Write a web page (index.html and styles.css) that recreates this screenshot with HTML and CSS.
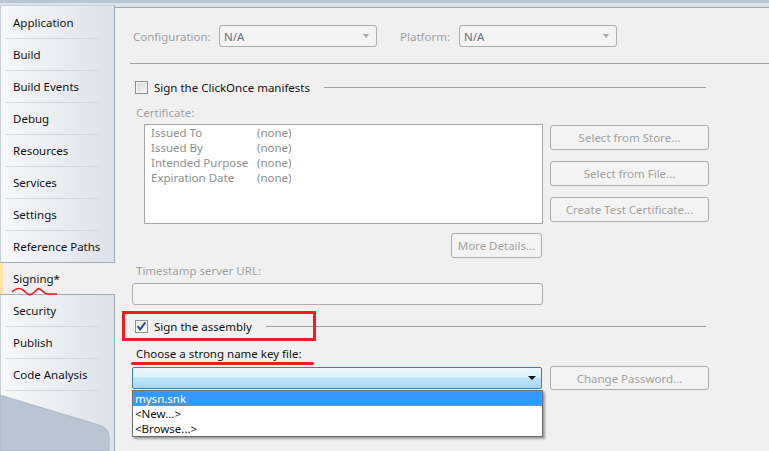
FILE: index.html
```html
<!DOCTYPE html>
<html>
<head>
<meta charset="utf-8">
<link rel="stylesheet" href="styles.css">
</head>
<body>
<div class="app">
  <nav class="tabs">
    <div class="group group-top">
      <div class="tab tab-first">Application</div>
      <div class="tab">Build</div>
      <div class="tab">Build Events</div>
      <div class="tab">Debug</div>
      <div class="tab">Resources</div>
      <div class="tab">Services</div>
      <div class="tab">Settings</div>
      <div class="tab">Reference Paths</div>
    </div>
    <div class="tab-selected">Signing*</div>
    <div class="group group-bottom">
      <div class="tab tab-first tab-short">Security</div>
      <div class="tab">Publish</div>
      <div class="tab">Code Analysis</div>
      <div class="tabs-filler">
        <svg class="filler-shape" width="114" height="60" viewBox="0 0 114 60">
          <path d="M0 6 Q0 4 3 5 L99 34 Q109 37 109 46 L109 60 L0 60 Z" fill="#bac4d3" stroke="#aeb8c8" stroke-width="1"/>
        </svg>
      </div>
    </div>
  </nav>

  <main class="content">
    <div class="config-row">
      <span class="label-disabled config-label">Configuration:</span>
      <div class="combo"><span>N/A</span><span class="arrow-grey"></span></div>
      <span class="label-disabled platform-label">Platform:</span>
      <div class="combo"><span>N/A</span><span class="arrow-grey"></span></div>
    </div>
    <div class="rule"></div>

    <div class="section-head section-clickonce">
      <span class="checkbox"></span>
      <span class="section-title">Sign the ClickOnce manifests</span>
      <span class="section-line"></span>
    </div>

    <div class="label-disabled cert-label">Certificate:</div>
    <div class="cert-row">
      <div class="cert-box">
        <div class="cert-line"><span class="cert-key">Issued To</span><span>(none)</span></div>
        <div class="cert-line"><span class="cert-key">Issued By</span><span>(none)</span></div>
        <div class="cert-line"><span class="cert-key">Intended Purpose</span><span>(none)</span></div>
        <div class="cert-line"><span class="cert-key">Expiration Date</span><span>(none)</span></div>
      </div>
      <div class="cert-buttons">
        <button class="btn btn-wide">Select from Store...</button>
        <button class="btn btn-wide">Select from File...</button>
        <button class="btn btn-wide">Create Test Certificate...</button>
      </div>
    </div>
    <div class="more-row"><button class="btn btn-more">More Details...</button></div>

    <div class="label-disabled ts-label">Timestamp server URL:</div>
    <div class="textbox"></div>

    <div class="section-head section-assembly">
      <span class="checkbox checkbox-checked">
        <svg width="11" height="11" viewBox="0 0 11 11"><path d="M1.6 5.2 L4.2 8.4 L9.4 1.4" fill="none" stroke="#34497a" stroke-width="1.9"/></svg>
      </span>
      <span class="section-title">Sign the assembly</span>
      <span class="section-line"></span>
    </div>

    <div class="key-label">Choose a strong name key file:</div>
    <div class="key-row">
      <div class="combo-focus"><span class="arrow-black"></span></div>
      <button class="btn btn-wide btn-pass">Change Password...</button>
      <ul class="dropdown">
        <li class="dropdown-item dropdown-item-active">mysn.snk</li>
        <li class="dropdown-item">&lt;New...&gt;</li>
        <li class="dropdown-item">&lt;Browse...&gt;</li>
      </ul>
    </div>
    <div class="under-note">When delay signed, the project will not run or be debuggable.</div>
  </main>

  <div class="annot-box"></div>
  <div class="annot-underline"></div>
  <svg class="annot-squiggle" width="48" height="12" viewBox="0 0 48 12">
    <path d="M1 6 C4 3, 8 1, 12 4 S17 10, 21 8 S26 1, 29 3 S34 9, 38 8 L46 8" fill="none" stroke="#ee1c25" stroke-width="1.6"/>
  </svg>
</div>
</body>
</html>
```

FILE: styles.css
```css
* { box-sizing: border-box; }
html, body { margin: 0; padding: 0; }
body {
  font-family: "Noto Sans", "Open Sans", sans-serif;
  font-size: 11.5px;
  color: #1e1e1e;
  width: 769px;
  height: 451px;
  overflow: hidden;
}
.app {
  position: relative;
  display: flex;
  width: 769px;
  height: 451px;
  background: #dde2ea;
  border-top: 3px solid #b9c4d4;
}

/* ---------- left tabs ---------- */
.tabs {
  width: 115px;
  flex: none;
  display: flex;
  flex-direction: column;
  padding-top: 2px;
}
.group {
  background: linear-gradient(to right, #f7f8fa, #dde1e8);
  border-left: 1px solid #c6cdd7;
  border-right: 1px solid #a2abb9;
}
.group-top {
  border-top: 1px solid #c9d0da;
  border-bottom: 1px solid #a2abb9;
  border-top-left-radius: 2px;
}
.group-bottom {
  flex: 1;
  display: flex;
  flex-direction: column;
  border-top: 1px solid #a2abb9;
}
.tab {
  height: 32px;
  line-height: 31px;
  padding-left: 12px;
  color: #111;
}
.tab::before {
  content: "";
  display: block;
  height: 1px;
  margin: 0 14px 0 -7px;
  background: #d4d8df;
}
.tab-first::before { background: transparent; }
.tab-short { height: 31px; line-height: 31px; }
.tab-short::before { display: none; }
.tab-selected {
  height: 31px;
  line-height: 31px;
  padding-left: 10px;
  background: #f0f0f0;
  border-left: 3px solid #fde4a6;
  color: #111;
}
.tabs-filler {
  flex: 1;
  display: flex;
  flex-direction: column;
  justify-content: flex-end;
}
.tabs-filler::before {
  content: "";
  display: block;
  height: 1px;
  margin: 0 14px auto 5px;
  background: #d4d8df;
}
.filler-shape { display: block; margin-left: -1px; }

/* ---------- content ---------- */
.content {
  flex: 1;
  margin-top: 4px;
  background: #f0f0f0;
  border-top: 1px solid #a7a7a7;
  padding-left: 15px;
  display: flex;
  flex-direction: column;
}
.label-disabled { color: #a2a2a2; }

.config-row {
  display: flex;
  align-items: center;
  margin-top: 17px;
  margin-left: 3px;
  height: 22px;
}
.config-label { width: 86px; }
.platform-label { width: 59px; margin-left: 23px; }
.combo {
  width: 158px;
  height: 22px;
  border: 1px solid #adadad;
  border-radius: 3px;
  background: #f3f3f3;
  display: flex;
  align-items: center;
  justify-content: space-between;
  padding: 0 7px 0 4px;
  color: #6e6e7c;
}
.arrow-grey {
  width: 0; height: 0;
  border-left: 3.5px solid transparent;
  border-right: 3.5px solid transparent;
  border-top: 4px solid #a8a8a8;
}
.rule {
  height: 1px;
  background: #a3a3a3;
  margin-top: 16px;
}

.section-head {
  display: flex;
  align-items: center;
  height: 16px;
  margin-left: 5px;
  margin-right: 63px;
}
.section-clickonce { margin-top: 15px; }
.section-assembly { margin-top: 13px; }
.checkbox {
  width: 13px;
  height: 13px;
  flex: none;
  border: 1px solid #8e8f8f;
  background: linear-gradient(135deg, #d8d8d8, #f6f6f6);
  box-shadow: inset 0 0 0 1px #f4f4f4;
  display: flex;
  align-items: center;
  justify-content: center;
}
.checkbox-checked { background: linear-gradient(135deg, #e0e0e0, #fafafa); }
.checkbox-checked svg { display: block; }
.section-title { margin-left: 6px; color: #111; }
.section-line {
  flex: 1;
  height: 1px;
  background: #a3a3a3;
  margin-left: 14px;
}

.cert-label { margin-top: 10px; margin-left: 6px; line-height: 16px; }
.cert-row {
  display: flex;
  align-items: flex-start;
  margin-top: 3px;
  margin-left: 14px;
}
.cert-box {
  width: 399px;
  height: 100px;
  background: #fff;
  border: 1px solid #a6a6a6;
  padding: 0 0 0 6px;
  color: #8e8e8e;
}
.cert-line { height: 15px; line-height: 15px; display: flex; }
.cert-key { width: 106px; }
.cert-buttons {
  display: flex;
  flex-direction: column;
  gap: 11px;
  margin-left: 7px;
  padding-top: 1px;
}
.btn {
  font-family: inherit;
  font-size: 11.5px;
  color: #a2a2a2;
  background: #f3f3f3;
  border: 1px solid #adadad;
  border-radius: 3px;
  height: 25px;
  padding: 0;
  margin: 0;
  text-align: center;
}
.btn-wide { width: 159px; }
.more-row { margin-top: 9px; margin-left: 321px; display: flex; }
.btn-more { width: 91px; }

.ts-label { margin-top: 5px; margin-left: 6px; line-height: 16px; }
.textbox {
  margin-top: 4px;
  margin-left: 2px;
  width: 411px;
  height: 22px;
  border: 1px solid #adadad;
  border-radius: 3px;
  background: #f3f3f3;
}

.key-label {
  margin-top: 12px;
  margin-left: 6px;
  line-height: 16px;
  color: #111;
}
.key-row {
  position: relative;
  display: flex;
  align-items: center;
  height: 24px;
  margin-top: 4px;
  margin-left: 2px;
}
.combo-focus {
  width: 410px;
  height: 22px;
  border: 1px solid #3c7fb1;
  border-radius: 2px;
  background: linear-gradient(to bottom, #ecf7fd 0%, #ddf1fc 45%, #bde5fa 50%, #a6d8f3 100%);
  display: flex;
  align-items: center;
  justify-content: flex-end;
  padding-right: 5px;
}
.arrow-black {
  width: 0; height: 0;
  border-left: 4px solid transparent;
  border-right: 4px solid transparent;
  border-top: 4px solid #111;
}
.btn-pass { margin-left: 8px; height: 24px; }

.dropdown {
  position: absolute;
  left: 0;
  top: 24px;
  width: 411px;
  height: 47px;
  margin: 0;
  padding: 0;
  list-style: none;
  background: #fff;
  border: 1px solid #6d6d6d;
  box-shadow: 2px 2px 2px rgba(0, 0, 0, 0.35);
  z-index: 2;
}
.dropdown-item {
  height: 15px;
  line-height: 15px;
  padding-left: 2px;
  color: #111;
}
.dropdown-item-active {
  background: #3399ff;
  color: #fff;
  border: 1px dotted #c9894a;
  line-height: 13px;
  padding-left: 1px;
}
.under-note {
  margin-top: 29px;
  margin-left: 6px;
  line-height: 16px;
  color: #333;
  white-space: nowrap;
}

/* ---------- annotations ---------- */
.annot-box {
  position: absolute;
  left: 122px;
  top: 308px;
  width: 194px;
  height: 30px;
  border: 3px solid #ee1c25;
}
.annot-underline {
  position: absolute;
  left: 131px;
  top: 359px;
  width: 183px;
  height: 3px;
  border-radius: 2px;
  background: #ee1c25;
}
.annot-squiggle {
  position: absolute;
  left: 11px;
  top: 283px;
}
```
